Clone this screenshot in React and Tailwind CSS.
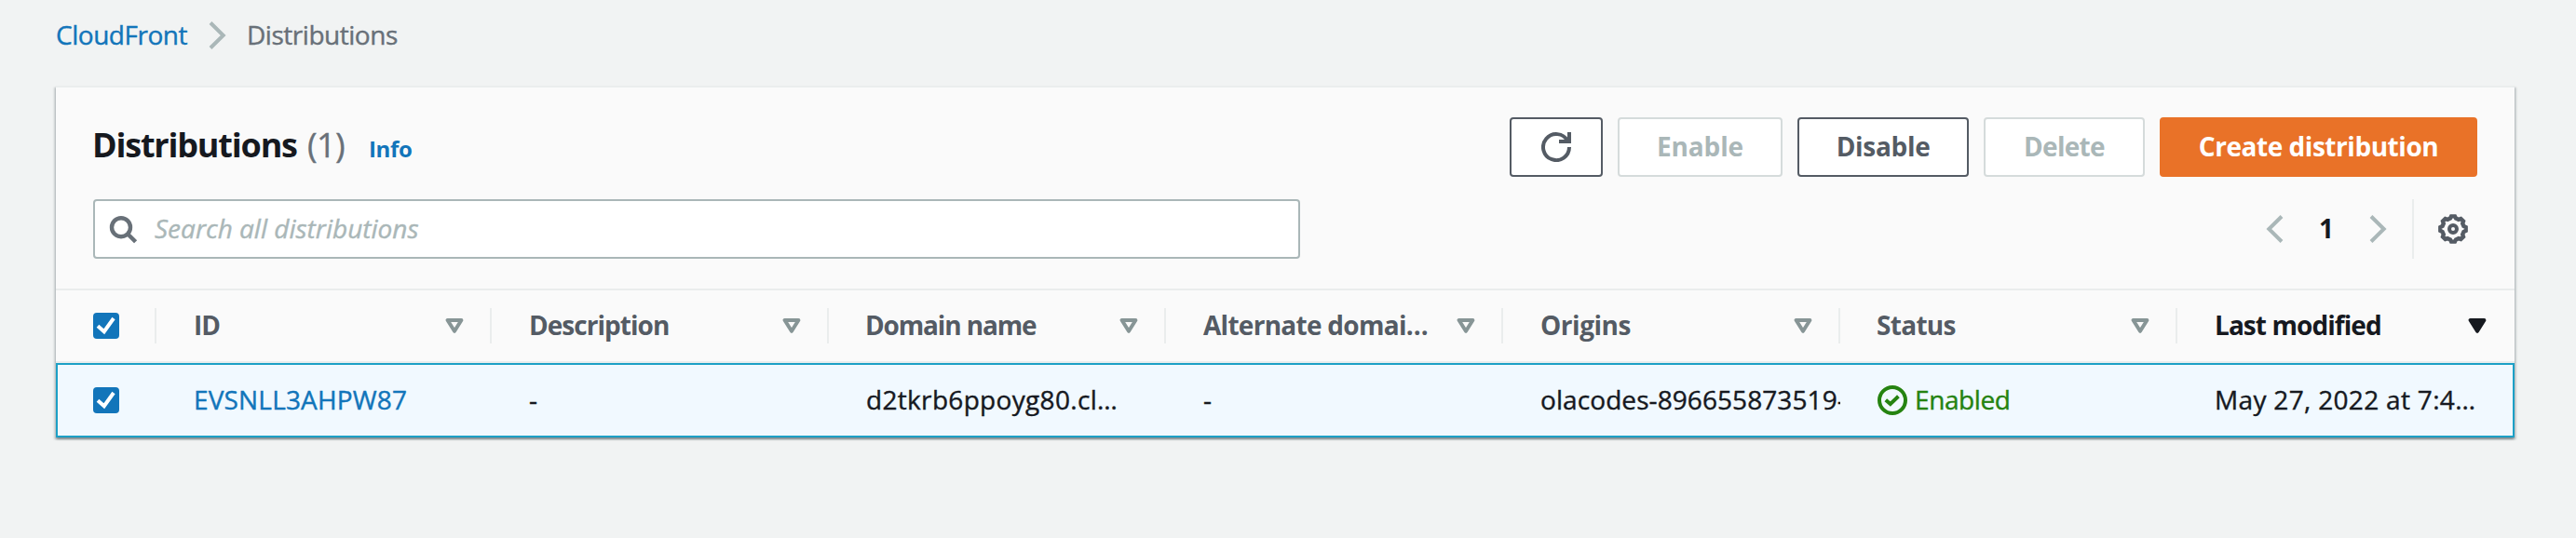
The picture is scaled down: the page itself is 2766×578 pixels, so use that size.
import React from "react";

const columns = [
  { label: "ID", width: "w-[360px] pl-10", tracking: "tracking-[-1px]" },
  { label: "Description", width: "w-[362px] pl-10", tracking: "tracking-[-0.96px]" },
  { label: "Domain name", width: "w-[362px] pl-[39px]", tracking: "tracking-[-1.15px]" },
  { label: "Alternate domai…", width: "w-[362px] pl-10", tracking: "tracking-[-0.72px]" },
  { label: "Origins", width: "w-[362px] pl-10", tracking: "tracking-[-0.47px]" },
  { label: "Status", width: "w-[362px] pl-[39px]", tracking: "tracking-[-0.7px]" },
  { label: "Last modified", width: "w-[362px] pl-10", tracking: "tracking-[-0.93px]", active: true },
];

function Chevron({ left }) {
  return (
    <svg className="h-8 w-8 shrink-0 text-[#aab7b8]" viewBox="0 0 32 32" fill="none" stroke="currentColor" strokeWidth="4">
      <path d={left ? "M24 2.5 10.3 16 24 29.5" : "M8 2.5 21.7 16 8 29.5"} />
    </svg>
  );
}

function SearchIcon() {
  return (
    <svg className="h-8 w-8 shrink-0 text-[#687078]" viewBox="0 0 32 32" fill="none" stroke="currentColor" strokeWidth="4.4">
      <circle cx="14" cy="14.2" r="10" />
      <path d="M21 21.2 29.6 29.8" />
    </svg>
  );
}

function RefreshIcon() {
  return (
    <svg className="h-8 w-8 text-[#545b64]" viewBox="0 0 32 32" fill="none" stroke="currentColor" strokeWidth="4">
      <path d="M30 16A14 14 0 1 1 28.2 9.2" />
      <path d="M30 0V10H19" />
    </svg>
  );
}

const gearPoints = Array.from({ length: 8 }, (_, i) =>
  [
    [-8, 13.8],
    [8, 13.8],
    [15, 11.8],
    [30, 11.8],
  ].map(([offset, radius]) => {
    const angle = ((i * 45 + offset) * Math.PI) / 180;
    return `${(16 + radius * Math.sin(angle)).toFixed(2)},${(16 - radius * Math.cos(angle)).toFixed(2)}`;
  })
)
  .flat()
  .join(" ");

function GearIcon() {
  return (
    <svg className="h-8 w-8 shrink-0 text-[#545b64]" viewBox="0 0 32 32" fill="none" stroke="currentColor" strokeWidth="4">
      <polygon points={gearPoints} strokeWidth="4.4" />
      <circle cx="16" cy="16" r="4" />
    </svg>
  );
}

function StatusIcon() {
  return (
    <svg className="h-8 w-8 shrink-0" viewBox="0 0 32 32" fill="none" stroke="currentColor" strokeWidth="4">
      <circle cx="16" cy="16" r="14" />
      <path d="M8.8 15.8 13.8 20 22.4 11.8" />
    </svg>
  );
}

function Checkbox() {
  return (
    <span className="flex h-7 w-7 items-center justify-center rounded bg-[#1275ba]">
      <svg className="h-7 w-7 text-white" viewBox="0 0 28 28" fill="none" stroke="currentColor" strokeWidth="4">
        <path d="M5 14.2 11.8 20.2 22 6" />
      </svg>
    </span>
  );
}

function SortIcon({ active }) {
  return (
    <svg
      className={active ? "h-4 w-5 shrink-0 fill-[#16191f] text-[#16191f]" : "h-4 w-5 shrink-0 fill-none text-[#879596]"}
      viewBox="0 0 20 16"
      stroke="currentColor"
      strokeWidth="4"
      strokeLinejoin="round"
    >
      <path d="M2.6 2H17.4L10 13.8Z" />
    </svg>
  );
}

function Button({ className, children }) {
  return (
    <button className={`flex h-16 items-center justify-center rounded border-2 pb-0.5 font-bold ${className}`}>
      {children}
    </button>
  );
}

export default function App() {
  return (
    <div className="h-[578px] w-[2766px] overflow-hidden bg-[#f1f3f3] font-['Open_Sans','Noto_Sans',sans-serif] text-[28px] leading-9 whitespace-nowrap text-[#16191f]">
      <nav className="flex h-[76px] items-center pl-[60px] [-webkit-text-stroke:0.4px]">
        <a className="w-[158px] pb-0.5 tracking-[-0.47px] text-[#1275ba]">CloudFront</a>
        <Chevron />
        <span className="ml-[15px] pb-0.5 tracking-[-0.47px] text-[#687078]">Distributions</span>
      </nav>

      <main className="mt-4 ml-[60px] w-[2640px] border-t-2 border-[#eaeded] bg-[#fafafa] shadow-[0_2px_2px_0_rgba(0,28,36,0.3),2px_2px_2px_0_rgba(0,28,36,0.15),-2px_2px_2px_0_rgba(0,28,36,0.15)]">
        <header className="flex flex-col gap-6 px-10 py-8">
          <div className="flex h-16 items-center justify-between">
            <div className="-ml-px flex items-baseline pb-1">
              <h1 className="w-[231px] text-4xl leading-10 font-bold tracking-[-1.2px]">Distributions</h1>
              <span className="w-[66px] text-4xl leading-10 tracking-[-0.6px] text-[#687078] [-webkit-text-stroke:0.4px]">(1)</span>
              <a className="text-2xl font-bold tracking-[-0.34px] text-[#1275ba]">Info</a>
            </div>
            <div className="flex gap-4">
              <button className="flex h-16 w-[100px] items-center justify-center rounded border-2 border-[#545b64] bg-white">
                <RefreshIcon />
              </button>
              <Button className="w-[177px] border-[#d5dbdb] bg-white tracking-[-0.15px] text-[#aab7b8]">Enable</Button>
              <Button className="w-[184px] border-[#545b64] bg-white tracking-[-0.31px] text-[#545b64]">Disable</Button>
              <Button className="w-[173px] border-[#d5dbdb] bg-white tracking-[-0.7px] text-[#aab7b8]">Delete</Button>
              <Button className="w-[341px] border-[#e97228] bg-[#e97228] tracking-[-0.46px] text-white">Create distribution</Button>
            </div>
          </div>

          <div className="flex h-16 items-center justify-between">
            <div className="flex h-16 w-[1296px] items-center rounded border-2 border-[#aab7b8] bg-white pl-3.5">
              <SearchIcon />
              <span className="ml-[18px] pb-0.5 text-[#aab7b8] italic [-webkit-text-stroke:0.4px]">Search all distributions</span>
            </div>
            <div className="flex h-16 items-center pr-2.5">
              <Chevron left />
              <span className="w-20 pb-0.5 text-center font-bold">1</span>
              <Chevron />
              <span className="mr-[26px] ml-5 h-16 w-0.5 bg-[#eaeded]" />
              <GearIcon />
            </div>
          </div>
        </header>

        <div className="flex h-20 items-center border-y-2 border-[#eaeded]">
          <div className="flex h-[38px] w-[108px] items-center border-r-2 border-[#eaeded] pl-10">
            <Checkbox />
          </div>
          {columns.map(({ label, width, tracking, active }) => (
            <div
              key={label}
              className={`flex h-[38px] items-center justify-between border-r-2 pr-7 font-bold ${width} ${
                active ? "border-transparent text-[#16191f]" : "border-[#eaeded] text-[#545b64]"
              }`}
            >
              <span className={`pb-0.5 ${tracking}`}>{label}</span>
              <SortIcon active={active} />
            </div>
          ))}
        </div>

        <div className="flex h-20 items-center border-2 border-[#1da0c6] bg-[#f1f9ff] [-webkit-text-stroke:0.4px]">
          <div className="w-[106px] pl-[38px]">
            <Checkbox />
          </div>
          <a className="w-[360px] pb-0.5 pl-10 tracking-[0.17px] text-[#1275ba]">EVSNLL3AHPW87</a>
          <span className="w-[362px] pb-0.5 pl-10">-</span>
          <span className="w-[362px] pb-0.5 pl-10 tracking-[0.32px]">d2tkrb6ppoyg80.cl…</span>
          <span className="w-[362px] pb-0.5 pl-10">-</span>
          <span className="w-[362px] overflow-hidden pb-0.5 pl-10 tracking-[0.08px]">olacodes-896655873519-</span>
          <span className="flex w-[362px] items-center gap-2 pl-10 text-[#258310]">
            <StatusIcon />
            <span className="pb-0.5 tracking-[-0.4px]">Enabled</span>
          </span>
          <span className="pb-0.5 pl-10 tracking-[0.32px]">May 27, 2022 at 7:4…</span>
        </div>
      </main>
    </div>
  );
}
